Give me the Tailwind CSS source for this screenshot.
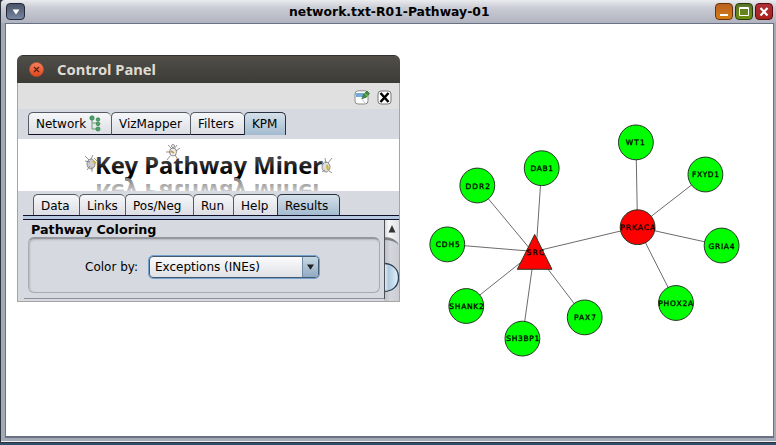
<!DOCTYPE html>
<html lang="en">
<head>
<meta charset="utf-8">
<title>network.txt-R01-Pathway-01</title>
<script src="https://cdn.jsdelivr.net/npm/@tailwindcss/browser@4"></script>
</head>
<body class="w-[776px] h-[445px] overflow-hidden bg-[#2f4f6c] text-black text-[12px] font-['DejaVu_Sans',sans-serif]">
<div class="h-[443px] bg-[#2c3440] pl-px pb-px">
<div class="h-full flex flex-col bg-[#a4a9b6] border-b border-[#eceef2] rounded-tl-[4px] overflow-hidden">
  <header class="h-[23px] shrink-0 flex items-center bg-linear-to-b from-[#eaebee] via-[#c9ccd4] via-35% to-[#b1b4bf] pl-[5px] pr-[3px]">
    <button class="w-[19px] h-[17px] rounded-[4px] border border-[#20283c] bg-linear-to-b from-[#4b5469] to-[#7886a0] flex items-center justify-center">
      <svg width="8" height="6" viewBox="0 0 8 6"><path d="M.5 .5h7L4 5.500z" fill="#fff"/></svg>
    </button>
    <h1 class="flex-1 pl-[264px] font-bold"><svg class="block" width="202" height="16"><text x="0" y="12" font-size="11.500" textLength="200.500" lengthAdjust="spacingAndGlyphs">network.txt-R01-Pathway-01</text></svg></h1>
    <div class="flex gap-[2px]">
      <button class="w-[18px] h-[17px] rounded-[4px] border border-[#6e3208] bg-linear-to-b from-[#b96023] to-[#d57d10]"><svg width="16" height="15"><path d="M4 10h8v2H4z" fill="#fff"/></svg></button>
      <button class="w-[18px] h-[17px] rounded-[4px] border border-[#273d06] bg-linear-to-b from-[#59752a] to-[#6e8f0a]"><svg width="16" height="15"><path d="M3.500 3.500h9v8h-9zM3 4.500h10" fill="none" stroke="#fff"/></svg></button>
      <button class="w-[18px] h-[17px] rounded-[4px] border border-[#5e0b10] bg-linear-to-b from-[#aa3038] to-[#a92017]"><svg width="16" height="15"><path d="M4.500 4l7 7.500M11.500 4l-7 7.500" stroke="#fff" stroke-width="2.200"/></svg></button>
    </div>
  </header>
  <main class="relative h-[415px] ml-[4px] w-[769px] bg-white border border-b-2 border-[#687284]">
    <svg class="absolute left-[-6px] top-[-24px]" width="776" height="436" viewBox="0 0 776 436">
      <g stroke="#6b6b6b" stroke-width="1">
        <path d="M532 251.300L477.300 185.500M536 251.500L541.700 168M534.500 251.500L447.300 244.300M534.500 251.500L466 306M534.500 251.500L522.300 338.700M534.500 251.500L584.700 317.300M534.500 251.500L637.500 227M637.500 227L636 142.300M637.500 227L705.300 174.300M637.500 227L721.500 245.500M637.500 227L676 303"/>
      </g>
      <g fill="#0f0" stroke="#263626" stroke-width="1">
        <circle cx="477.300" cy="185.500" r="17.400"/><circle cx="541.700" cy="168.200" r="17.400"/><circle cx="447.300" cy="244.400" r="17.400"/><circle cx="466.300" cy="306" r="17.400"/><circle cx="522.400" cy="338.600" r="17.400"/><circle cx="584.700" cy="317.400" r="17.400"/><circle cx="635.900" cy="142.400" r="17.400"/><circle cx="705.400" cy="174.500" r="17.400"/><circle cx="721.600" cy="245.500" r="17.400"/><circle cx="676" cy="303" r="17.400"/>
        <circle cx="637.600" cy="227.200" r="17.400" fill="#f00"/>
        <path d="M534.700 234.500L552 269.300H517.300z" fill="#f00"/>
      </g>
      <g font-size="7.500" fill="#000" stroke="#000" stroke-width=".3">
        <text x="465.500" y="188.500" textLength="24.500">DDR2</text>
        <text x="530.500" y="171" textLength="22.500">DAB1</text>
        <text x="435.700" y="247" textLength="24">CDH5</text>
        <text x="449.300" y="309" textLength="34.500">SHANK2</text>
        <text x="506.300" y="341.200" textLength="33">SH3BP1</text>
        <text x="574" y="320" textLength="22">PAX7</text>
        <text x="526.500" y="255" textLength="17.500">SRC</text>
        <text x="625.800" y="145" textLength="19">WT1</text>
        <text x="692" y="177" textLength="27">FXYD1</text>
        <text x="708.500" y="249" textLength="26">GRIA4</text>
        <text x="658.200" y="306" textLength="35">PHOX2A</text>
        <text x="620.200" y="230" textLength="35">PRKACA</text>
      </g>
    </svg>

    <section class="absolute left-[11px] top-[31px] w-[383px] h-[247px] rounded-t-[6px] overflow-hidden bg-[#d6d9e0] flex flex-col">
      <div class="h-[28px] shrink-0 bg-linear-to-b from-[#504e47] to-[#3c3b37] border-t border-[#33322e] flex items-center pl-[12px] gap-[13px]">
        <svg width="15" height="15" viewBox="0 0 15 15"><defs><linearGradient id="o" x2="0" y2="1"><stop stop-color="#f58260"/><stop offset="1" stop-color="#e2451b"/></linearGradient></defs><circle cx="7.500" cy="7.500" r="7" fill="url(#o)" stroke="#c9512f" stroke-width=".6"/><path d="M5 5l5 5M10 5l-5 5" stroke="#572010" stroke-width="1.200"/></svg>
        <svg width="104" height="24"><text x="0" y="16.500" font-family="Noto Sans" font-weight="bold" font-size="13.500" textLength="99" lengthAdjust="spacingAndGlyphs" fill="#dfdbd2">Control Panel</text></svg>
      </div>
      <div class="flex-1 flex flex-col border-x border-b border-[#a6a5a3]">
      <div class="h-[26px] shrink-0 bg-[#e0e0e0] flex justify-end items-center pr-[7px] gap-[7px] pt-[2px]">
        <svg width="16" height="15" viewBox="0 0 16 15"><rect x="1" y=".8" width="13" height="13.200" rx="3" fill="#fff" stroke="#8c8c8c"/><path d="M1.500 4h9M2 6h7" stroke="#4a8fd0" stroke-width="1.600"/><path d="M7 8l4 5" stroke="#b8c4d4"/><path d="M8 8.500L9.500 4.500 13 1 15.500 3.500 12 7.500z" fill="#3f9140" stroke="#29672d" stroke-width=".7"/><path d="M11 3.500l2.500 2.500" stroke="#a0ca68"/></svg>
        <svg width="15" height="15" viewBox="0 0 15 15"><rect x="1" y="1" width="13" height="13" rx="3" fill="#fff" stroke="#777"/><path d="M3.500 3l8 9M11.500 3l-8 9" stroke="#000" stroke-width="2.500"/></svg>
      </div>
      <nav class="h-[30px] shrink-0 pl-[10px] pt-[3px] flex items-start">
        <div class="flex h-[23px] leading-[23px] *:border *:border-r-0 *:border-[#555a64] *:border-b-[#10102a] *:rounded-t-[5px] *:bg-linear-to-b *:from-[#f6f7f9] *:to-[#dcdee4] *:pl-[7px] *:whitespace-nowrap">
          <div class="w-[83px] flex">Network
            <svg class="ml-[3px] mt-[2px]" width="13" height="17" viewBox="0 0 13 17"><path d="M3 3v11h5M3 8h5" fill="none" stroke="#6a9b75"/><g fill="#4ba365" stroke="#2c7545" stroke-width=".6"><circle cx="3" cy="3" r="2.200"/><circle cx="9" cy="4.500" r="1.800"/><circle cx="9" cy="8.800" r="1.900"/><circle cx="9" cy="14" r="2.100"/></g></svg></div>
          <div class="w-[79px]">VizMapper</div>
          <div class="w-[54px]">Filters</div>
        </div>
        <div class="w-[42px] h-[23px] leading-[23px] border border-b-0 border-[#26313f] rounded-t-[5px] bg-linear-to-b from-[#d5e0e9] to-[#a3bbd0] pl-[7px]">KPM</div>
      </nav>
      <div class="h-[52px] shrink-0 bg-white">
        <svg width="381" height="52" viewBox="18 139 381 52">
          <defs>
            <linearGradient id="t" x2="0" y2="1"><stop offset=".3" stop-color="#444"/><stop offset=".75" stop-color="#000"/></linearGradient>
            <linearGradient id="r" gradientUnits="userSpaceOnUse" x1="0" y1="178" x2="0" y2="167"><stop stop-color="#888"/><stop offset="1" stop-color="#ccc"/></linearGradient>
          </defs>
          <g font-family="Noto Sans" font-weight="bold" font-size="23.500">
            <text x="95" y="174" textLength="228" lengthAdjust="spacingAndGlyphs" fill="url(#t)">Key Pathway Miner</text>
            <text transform="translate(0 358) scale(1 -1)" x="95" y="174" textLength="228" lengthAdjust="spacingAndGlyphs" fill="url(#r)">Key Pathway Miner</text>
          </g>
          <g fill="none" stroke="#777" stroke-width=".8">
            <ellipse cx="91" cy="164" rx="4" ry="5" fill="#ccc"/><path d="M85 156l4 4M93 155l-2 4M85 161l5 1M87 170l3-4M92 172l0-5M94 158l3 3"/><path d="M93 161l3 2" stroke="#d2ad20" stroke-width="1.600"/>
            <ellipse cx="173" cy="152" rx="3.500" ry="4" fill="#eee"/><path d="M168 145l4 4M177 145l-3 4M166 152h5M176 151l4-3M170 156l-3 4M175 155l2 3"/><path d="M171 151l3 2" stroke="#c9a12c" stroke-width="1.600"/><circle cx="173" cy="146" r="1.500"/>
            <ellipse cx="326" cy="167" rx="4" ry="5" fill="#ddd"/><path d="M320 161l4 3M325 158l1 5M328 163l4-5M322 172l3-2M329 171l3 2"/><path d="M327 165l1 5" stroke="#d2b525" stroke-width="2"/>
          </g>
        </svg>
      </div>
      <nav class="h-[29px] shrink-0 pt-[3px] flex flex-col">
        <div class="flex pl-[15px] h-[21px] leading-[22px]">
          <div class="flex *:border *:border-r-0 *:border-b-0 *:border-[#555a64] *:rounded-t-[5px] *:bg-linear-to-b *:from-[#f6f7f9] *:to-[#dcdee4] *:pl-[7px] *:whitespace-nowrap">
            <div class="w-[46px]">Data</div><div class="w-[46px]">Links</div><div class="w-[68px]">Pos/Neg</div><div class="w-[40px]">Run</div><div class="w-[44px]">Help</div>
          </div>
          <div class="w-[63px] border border-b-0 border-[#26313f] rounded-t-[5px] bg-linear-to-b from-[#d5e0e9] to-[#a3bbd0] pl-[7px]">Results</div>
        </div>
        <div class="h-[5px] ml-[5px] border-y border-[#10102a] bg-[#b5c8df]"></div>
      </nav>
      <div class="flex-1 flex pl-[6px]">
        <div class="w-[360px] h-[79px] border-b border-[#8c9099] pl-[4px]">
          <h2 class="font-bold pl-[3px] h-[17px]"><svg class="block" width="130" height="17"><text x="0" y="14" font-size="12" textLength="125.500" lengthAdjust="spacingAndGlyphs">Pathway Coloring</text></svg></h2>
          <div class="w-[352px] h-[56px] rounded-[6px] border border-t-2 border-[#a8abb1] border-t-[#94979d] shadow-[inset_1px_1px_2px_#b5b8bd] flex items-center pl-[56px] pt-[3px]">
            <span class="w-[64px] whitespace-nowrap">Color by:</span>
            <div class="w-[170px] h-[22px] rounded-[4px] border border-[#435a73] outline-1 outline-[#74a1ce] flex overflow-hidden bg-linear-to-b from-[#fbfbfc] to-[#dfe1e6]">
              <div class="flex-1 pl-[5px] leading-[21px]">Exceptions (INEs)</div>
              <div class="w-[16px] border-l border-[#6f8ba6] bg-linear-to-b from-[#c8d8e4] to-[#90aac2] flex items-center justify-center"><svg width="7" height="6"><path d="M0 .5h7L3.500 5.800z" fill="#222"/></svg></div>
            </div>
          </div>
        </div>
        <svg width="15" height="81" viewBox="384 220 15 81">
          <defs>
            <linearGradient id="s"><stop stop-color="#babdc3"/><stop offset=".4" stop-color="#d4d6dc"/><stop offset="1" stop-color="#cbcdd3"/></linearGradient>
            <linearGradient id="b"><stop stop-color="#eef5fb"/><stop offset=".3" stop-color="#b0c9df"/><stop offset="1" stop-color="#e3f3fc"/></linearGradient>
            <linearGradient id="u"><stop stop-color="#cfd1d4"/><stop offset=".3" stop-color="#f7f7f8"/><stop offset="1" stop-color="#dfe1e5"/></linearGradient>
          </defs>
          <path d="M384 220h15v81h-15z" fill="url(#s)"/>
          <path d="M384 220h15v26q-3-8-14-8h-1z" fill="url(#u)"/>
          <path d="M384 237q11 0 15 8-5-5-15-5z" fill="#7d8084"/>
          <path d="M388.500 232.500h7L392 225z" fill="#333"/>
          <path d="M384 263.500c8 0 14.500 5 14.500 14s-6.500 14-14.500 14" fill="url(#b)" stroke="#2e4156" stroke-width="1.300"/>
          <path d="M384.500 220v79" stroke="#4d5056"/>
        </svg>
      </div>
      </div>
    </section>
  </main>
</div>
</div>
</body>
</html>
